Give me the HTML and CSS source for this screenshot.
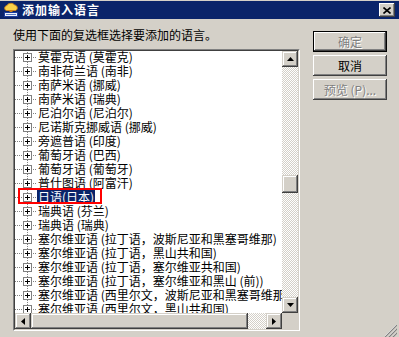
FILE: index.html
```html
<!DOCTYPE html>
<html lang="zh-CN">
<head>
<meta charset="UTF-8">
<meta name="viewport" content="width=device-width, initial-scale=1.0">
<title>添加输入语言</title>
<link rel="stylesheet" href="styles.css">
</head>
<body>
<div class="window">
    <div class="titlebar">
        <svg class="app-icon" width="16" height="16" viewBox="0 0 16 16">
            <path d="M3.5 8.5 C1 8 1 4 4 3.5 C5 1 10 0.5 11.5 3 C14.5 3 15.5 7.5 12.5 8.5 Z" fill="#f8d048" stroke="#c8801c"/>
            <rect x="6.5" y="8" width="3" height="2" fill="#c8801c"/>
            <rect x="1.5" y="10.5" width="13" height="4" fill="#eaf2ff" stroke="#1c3c9c"/>
            <path d="M3 12.5h10" stroke="#5878c0"/>
        </svg>
        <span class="title">添加输入语言</span>
        <button class="close">
            <svg width="8" height="7" viewBox="0 0 8 7"><path d="M0.5 0.5L7.5 6.5M7.5 0.5L0.5 6.5" stroke="#000" stroke-width="1.6"/></svg>
        </button>
    </div>
    <div class="content">
        <div class="main">
            <p class="prompt">使用下面的复选框选择要添加的语言。</p>
            <div class="listbox">
                <div class="listbox-inner">
                    <div class="tree">
                        <div class="items">
                            <div class="item"><span class="node"><span class="plus"></span></span><span class="label">莫霍克语 (莫霍克)</span></div>
                            <div class="item"><span class="node"><span class="plus"></span></span><span class="label">南非荷兰语 (南非)</span></div>
                            <div class="item"><span class="node"><span class="plus"></span></span><span class="label">南萨米语 (挪威)</span></div>
                            <div class="item"><span class="node"><span class="plus"></span></span><span class="label">南萨米语 (瑞典)</span></div>
                            <div class="item"><span class="node"><span class="plus"></span></span><span class="label">尼泊尔语 (尼泊尔)</span></div>
                            <div class="item"><span class="node"><span class="plus"></span></span><span class="label">尼诺斯克挪威语 (挪威)</span></div>
                            <div class="item"><span class="node"><span class="plus"></span></span><span class="label">旁遮普语 (印度)</span></div>
                            <div class="item"><span class="node"><span class="plus"></span></span><span class="label">葡萄牙语 (巴西)</span></div>
                            <div class="item"><span class="node"><span class="plus"></span></span><span class="label">葡萄牙语 (葡萄牙)</span></div>
                            <div class="item"><span class="node"><span class="plus"></span></span><span class="label">普什图语 (阿富汗)</span></div>
                            <div class="item selected"><span class="node"><span class="plus"></span></span><span class="label">日语(日本)</span></div>
                            <div class="item"><span class="node"><span class="plus"></span></span><span class="label">瑞典语 (芬兰)</span></div>
                            <div class="item"><span class="node"><span class="plus"></span></span><span class="label">瑞典语 (瑞典)</span></div>
                            <div class="item"><span class="node"><span class="plus"></span></span><span class="label">塞尔维亚语 (拉丁语，波斯尼亚和黑塞哥维那)</span></div>
                            <div class="item"><span class="node"><span class="plus"></span></span><span class="label">塞尔维亚语 (拉丁语，黑山共和国)</span></div>
                            <div class="item"><span class="node"><span class="plus"></span></span><span class="label">塞尔维亚语 (拉丁语，塞尔维亚共和国)</span></div>
                            <div class="item"><span class="node"><span class="plus"></span></span><span class="label">塞尔维亚语 (拉丁语，塞尔维亚和黑山 (前))</span></div>
                            <div class="item"><span class="node"><span class="plus"></span></span><span class="label">塞尔维亚语 (西里尔文，波斯尼亚和黑塞哥维那)</span></div>
                            <div class="item"><span class="node"><span class="plus"></span></span><span class="label">塞尔维亚语 (西里尔文，黑山共和国)</span></div>
                        </div>
                    </div>
                    <div class="vscroll">
                        <div class="sb-btn"><svg width="7" height="4" viewBox="0 0 7 4"><path d="M3.5 0L7 4H0Z" fill="#000"/></svg></div>
                        <div class="track vtrack"><div class="thumb vthumb"></div></div>
                        <div class="sb-btn"><svg width="7" height="4" viewBox="0 0 7 4"><path d="M0 0H7L3.5 4Z" fill="#000"/></svg></div>
                    </div>
                    <div class="hscroll">
                        <div class="sb-btn"><svg width="4" height="7" viewBox="0 0 4 7"><path d="M0 3.5L4 0V7Z" fill="#000"/></svg></div>
                        <div class="track htrack"><div class="thumb hthumb"></div></div>
                        <div class="sb-btn"><svg width="4" height="7" viewBox="0 0 4 7"><path d="M0 0L4 3.5L0 7Z" fill="#000"/></svg></div>
                    </div>
                    <div class="corner"></div>
                </div>
            </div>
        </div>
        <div class="buttons">
            <button class="button default disabled">确定</button>
            <button class="button">取消</button>
            <button class="button disabled">预览 (P)...</button>
        </div>
    </div>
    <svg class="grip" width="12" height="12" viewBox="0 0 12 12">
        <path d="M11 0L0 11M11 4L4 11M11 8L8 11" stroke="#fff" stroke-width="1"/>
        <path d="M12 0L0 12M12 4L4 12M12 8L8 12" stroke="#808080" stroke-width="1.2"/>
    </svg>
</div>
</body>
</html>
```

FILE: styles.css
```css
body {
    margin: 0;
    background-color: #d4d0c8;
    font-family: "Noto Sans CJK SC", "Noto Sans", sans-serif;
    font-size: 12px;
    color: #000;
}
.window {
    position: relative;
    width: 399px;
    height: 337px;
    overflow: hidden;
}
.titlebar {
    display: flex;
    align-items: center;
    height: 18px;
    margin-top: 1px;
    padding: 0 4px 0 3px;
    background-color: #0a246a;
    color: #fff;
}
.app-icon {
    flex: none;
}
.title {
    margin-left: 3px;
    font-weight: bold;
    letter-spacing: 1px;
    line-height: 18px;
}
.close {
    display: flex;
    align-items: center;
    justify-content: center;
    width: 16px;
    height: 14px;
    margin-left: auto;
    padding: 0;
    border: none;
    background-color: #d4d0c8;
    box-shadow: inset -1px -1px #404040, inset 1px 1px #fff, inset -2px -2px #808080, inset 2px 2px #d4d0c8;
}
.content {
    display: flex;
    padding: 9px 0 0 13px;
}
.main {
    width: 287px;
}
.prompt {
    margin: 0;
    line-height: 14px;
    white-space: nowrap;
}
.listbox {
    margin-top: 7px;
    border: 1px solid;
    border-color: #808080 #fff #fff #808080;
}
.listbox-inner {
    display: grid;
    grid-template-columns: 267px 16px;
    grid-template-rows: 262px 16px;
    border: 1px solid;
    border-color: #404040 #d4d0c8 #d4d0c8 #404040;
}
.tree {
    background-color: #fff;
    overflow: hidden;
}
.items {
    margin-top: -1px;
}
.item {
    display: flex;
    height: 14px;
    white-space: nowrap;
}
.node {
    display: flex;
    align-items: center;
    flex: none;
    width: 22px;
    height: 14px;
    background:
        repeating-linear-gradient(#808080 0 1px, transparent 1px 2px) 12px 0 / 1px 100% no-repeat,
        repeating-linear-gradient(to right, #808080 0 1px, transparent 1px 2px) 0 7px / 100% 1px no-repeat;
}
.plus {
    box-sizing: border-box;
    width: 9px;
    height: 9px;
    margin-left: 8px;
    border: 1px solid #808080;
    background:
        linear-gradient(#000, #000) center / 5px 1px no-repeat,
        linear-gradient(#000, #000) center / 1px 5px no-repeat,
        #fff;
}
.label {
    padding: 0 1px;
    line-height: 13px;
    height: 13px;
}
.selected {
    position: relative;
}
.selected .label {
    background-color: #0a246a;
    color: #fff;
}
.selected::after {
    content: "";
    position: absolute;
    left: 3px;
    top: -2px;
    width: 84px;
    height: 16px;
    box-sizing: border-box;
    border: 2px solid #f00;
}
.vscroll {
    display: flex;
    flex-direction: column;
}
.hscroll {
    display: flex;
}
.sb-btn,
.thumb {
    background-color: #d4d0c8;
    box-shadow: inset -1px -1px #404040, inset 1px 1px #d4d0c8, inset -2px -2px #808080, inset 2px 2px #fff;
}
.sb-btn {
    display: flex;
    align-items: center;
    justify-content: center;
    flex: none;
    width: 16px;
    height: 16px;
}
.track {
    flex: 1;
    display: flex;
    background: repeating-conic-gradient(#fff 0 25%, #d4d0c8 0 50%) 0 0 / 2px 2px;
}
.vtrack {
    flex-direction: column;
}
.vthumb {
    height: 18px;
    margin-top: 108px;
}
.hthumb {
    width: 217px;
}
.corner {
    background-color: #d4d0c8;
}
.buttons {
    display: flex;
    flex-direction: column;
    gap: 3px;
    margin-left: 13px;
    padding-top: 3px;
}
.button {
    box-sizing: border-box;
    width: 74px;
    height: 21px;
    padding: 0;
    border: none;
    font-family: inherit;
    font-size: 12px;
    color: #000;
    background-color: #d4d0c8;
    box-shadow: inset -1px -1px #404040, inset 1px 1px #fff, inset -2px -2px #808080, inset 2px 2px #d4d0c8;
}
.button.default {
    border: 1px solid #000;
}
.button.disabled {
    color: #808080;
    text-shadow: 1px 1px #fff;
}
.grip {
    position: absolute;
    right: 2px;
    bottom: 0;
}
```
